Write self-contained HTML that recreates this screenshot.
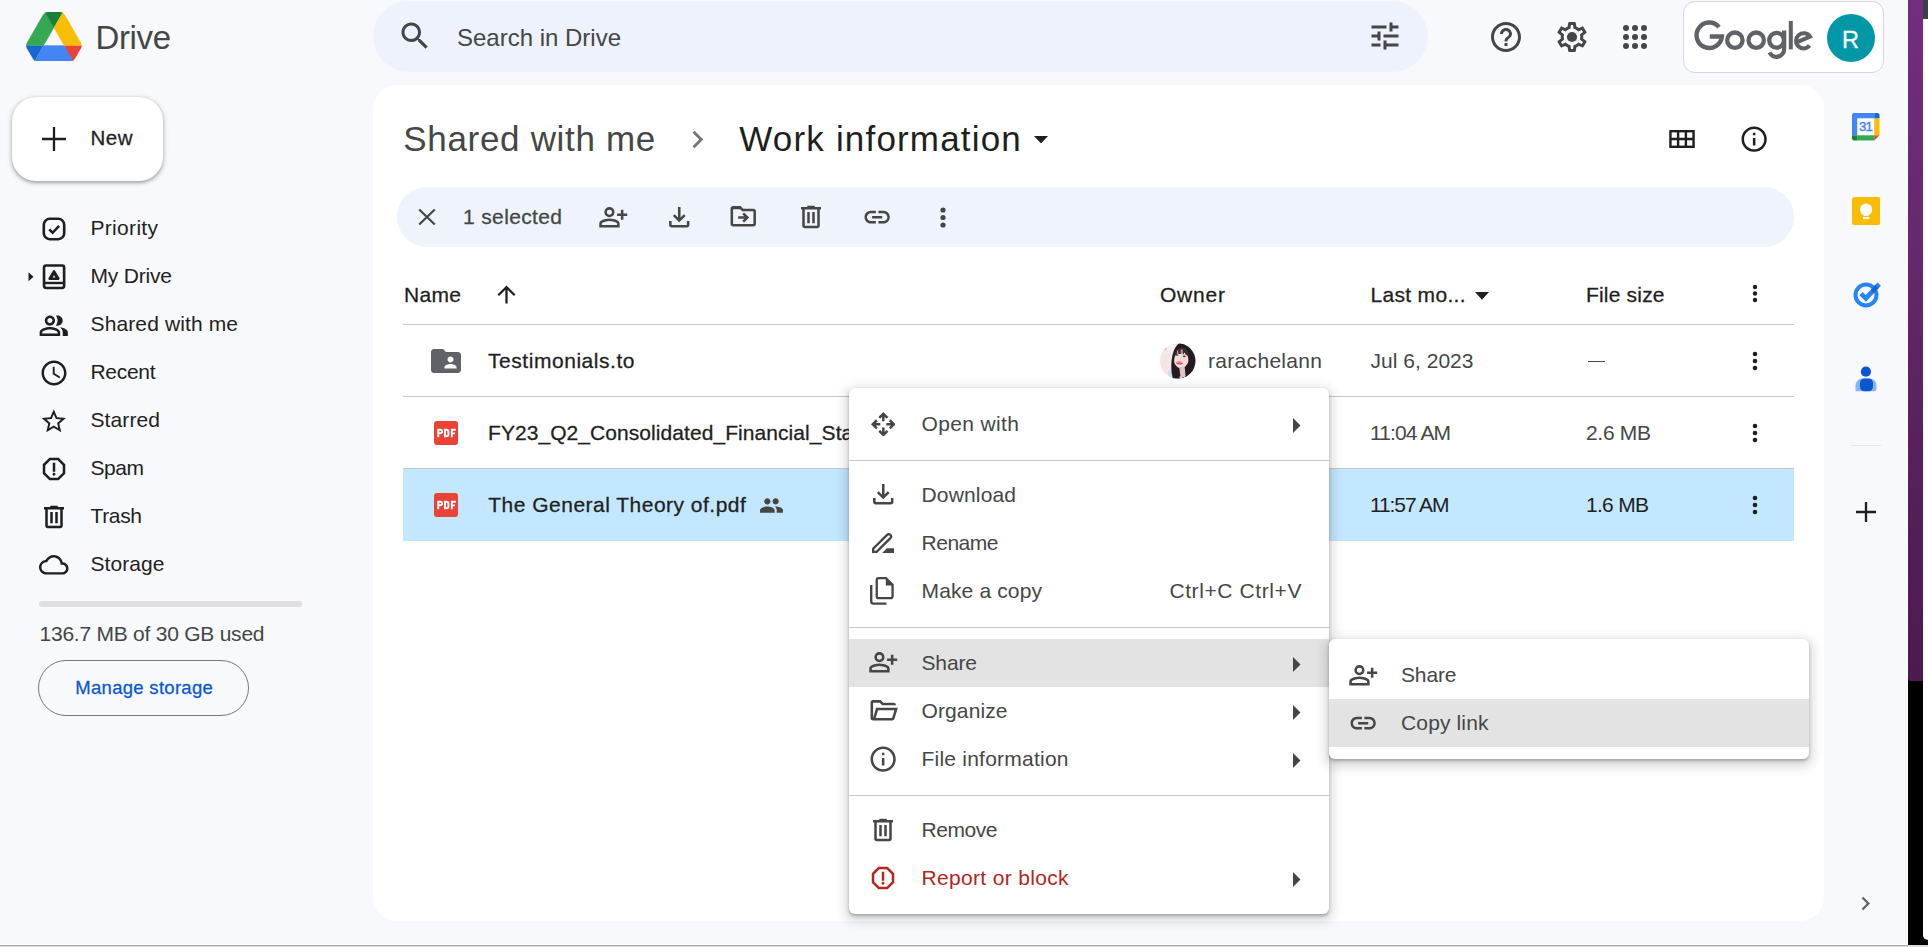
<!DOCTYPE html>
<html><head><meta charset="utf-8"><title>Drive</title>
<style>
html,body{margin:0;padding:0;}
body{width:1928px;height:947px;overflow:hidden;background:#f7f9fc;position:relative;font-family:"Liberation Sans",sans-serif;}
.a{position:absolute;display:block;}
.t{white-space:nowrap;line-height:1;}
</style></head><body>
<div class="a" style="left:1908px;top:670px;width:20px;height:275px;background:#000;"></div>
<div class="a" style="left:1908px;top:0px;width:15px;height:680.5px;background:linear-gradient(180deg,#712e7d 0%,#66286f 35%,#59205d 65%,#4e194f 100%);border-bottom-left-radius:3px;"></div>
<div class="a" style="left:1923px;top:0px;width:5px;height:19px;background:#3c4043;"></div>
<div class="a" style="left:1923px;top:19px;width:5px;height:920.5px;background:#fff;border-bottom-left-radius:6px;"></div>
<div class="a" style="left:1907px;top:0px;width:1px;height:945px;background:#fff;"></div>
<div class="a" style="left:0px;top:944px;width:1908px;height:1px;background:#fff;"></div>
<div class="a" style="left:0px;top:945px;width:1908px;height:1px;background:#aaa8b4;"></div>
<div class="a" style="left:0px;top:946px;width:1908px;height:1px;background:#dcdaea;"></div>
<div class="a" style="left:1908px;top:945px;width:20px;height:2px;background:#dcdcdc;"></div>
<svg class="a" style="left:26px;top:11.8px" width="55.8" height="49.4" viewBox="0 0 87.3 78"><path d="m6.6 66.85 3.85 6.65c.8 1.4 1.95 2.5 3.3 3.3l13.750-23.800h-27.500c0 1.550.4 3.100 1.200 4.500z" fill="#1967d2" stroke="#1967d2" stroke-width=".5"/><path d="m43.650 25-13.750-23.800c-1.350.8-2.500 1.900-3.300 3.300l-25.400 44a9.060 9.060 0 0 0 -1.200 4.500h27.500z" fill="#34a853" stroke="#34a853" stroke-width=".5"/><path d="m73.550 76.800c1.350-.8 2.500-1.900 3.300-3.300l1.600-2.750 7.650-13.250c.8-1.400 1.200-2.950 1.200-4.500h-27.502l5.852 11.500z" fill="#ea4335" stroke="#ea4335" stroke-width=".5"/><path d="m43.650 25 13.750-23.800c-1.350-.8-2.900-1.200-4.500-1.200h-18.500c-1.600 0-3.150.45-4.500 1.200z" fill="#188038" stroke="#188038" stroke-width=".5"/><path d="m59.800 53h-32.300l-13.750 23.800c1.350.8 2.900 1.200 4.500 1.200h50.800c1.600 0 3.150-.45 4.500-1.200z" fill="#4285f4" stroke="#4285f4" stroke-width=".5"/><path d="m73.400 26.500-12.700-22c-.8-1.400-1.950-2.500-3.300-3.300l-13.750 23.800 16.150 28h27.450c0-1.550-.4-3.100-1.200-4.500z" fill="#fbbc04" stroke="#fbbc04" stroke-width=".5"/></svg>
<span class="a t" id="drive" style="top:20.82px;font-size:33px;color:#444746;letter-spacing:-0.379px;left:95.50px;">Drive</span>
<div class="a" style="left:372.5px;top:0.5px;width:1055px;height:71.3px;background:#edf2fc;border-radius:36px;"></div>
<svg class="a" style="left:396.60px;top:17.70px" width="36" height="36" viewBox="0 0 24 24" fill="#444746"><path d="M15.5 14h-.79l-.28-.27C15.41 12.59 16 11.11 16 9.5 16 5.91 13.09 3 9.5 3S3 5.91 3 9.5 5.91 16 9.5 16c1.61 0 3.09-.59 4.23-1.57l.27.28v.79l5 4.99L20.49 19l-4.99-5zm-6 0C7.01 14 5 11.99 5 9.5S7.01 5 9.5 5 14 7.01 14 9.5 11.99 14 9.5 14z"/></svg>
<span class="a t" id="search" style="top:25.98px;font-size:24px;color:#444746;letter-spacing:-0.004px;left:457.00px;">Search in Drive</span>
<svg class="a" style="left:1367.00px;top:18.00px" width="36" height="36" viewBox="0 0 24 24" fill="#444746"><path d="M3 17v2h6v-2H3zM3 5v2h10V5H3zm10 16v-2h8v-2h-8v-2h-2v6h2zM7 9v2H3v2h4v2h2V9H7zm14 4v-2H11v2h10zm-6-4h2V7h4V5h-4V3h-2v6z"/></svg>
<svg class="a" style="left:1488.00px;top:19.00px" width="36" height="36" viewBox="0 0 24 24" fill="#444746"><path d="M11 18h2v-2h-2v2zm1-16C6.48 2 2 6.48 2 12s4.48 10 10 10 10-4.48 10-10S17.52 2 12 2zm0 18c-4.41 0-8-3.59-8-8s3.59-8 8-8 8 3.59 8 8-3.59 8-8 8zm0-14c-2.21 0-4 1.79-4 4h2c0-1.1.9-2 2-2s2 .9 2 2c0 2-3 1.750-3 5h2c0-2.250 3-2.500 3-5 0-2.210-1.790-4-4-4z"/></svg>
<svg class="a" style="left:1554.30px;top:19.20px" width="36" height="36" viewBox="0 0 24 24" fill="#444746"><path d="M19.43 12.98c.04-.32.07-.64.07-.98 0-.34-.03-.66-.07-.98l2.110-1.650c.19-.15.24-.42.12-.64l-2-3.460c-.09-.16-.26-.25-.44-.25-.06 0-.12.010-.17.030l-2.490 1c-.52-.4-1.080-.73-1.690-.98l-.38-2.650C14.460 2.180 14.250 2 14 2h-4c-.25 0-.46.180-.49.420l-.38 2.650c-.61.250-1.170.590-1.690.980l-2.490-1c-.06-.020-.12-.030-.18-.030-.17 0-.34.090-.43.250l-2 3.460c-.13.220-.07.490.12.640l2.110 1.650c-.04.320-.07.650-.07.980 0 .33.030.66.070.98l-2.110 1.650c-.19.150-.24.420-.12.640l2 3.460c.09.160.26.250.44.250.06 0 .12-.010.17-.030l2.490-1c.52.400 1.080.730 1.690.980l.38 2.650c.03.240.24.420.49.420h4c.25 0 .46-.180.490-.420l.38-2.650c.61-.250 1.170-.590 1.690-.980l2.490 1c.06.020.12.030.18.030.17 0 .34-.090.43-.250l2-3.460c.12-.220.07-.490-.12-.640l-2.110-1.650zm-1.980-1.710c.04.310.05.520.05.730 0 .21-.02.430-.05.730l-.14 1.130.89.700 1.080.840-.7 1.210-1.270-.510-1.040-.420-.9.680c-.43.320-.84.560-1.250.730l-1.060.430-.16 1.130-.2 1.350h-1.400l-.19-1.350-.16-1.130-1.060-.430c-.43-.180-.83-.410-1.230-.710l-.91-.7-1.060.430-1.270.510-.7-1.210 1.080-.840.89-.7-.14-1.130c-.03-.310-.05-.540-.05-.740s.02-.430.05-.730l.14-1.130-.89-.7-1.080-.840.7-1.210 1.270.510 1.040.420.9-.680c.43-.320.84-.560 1.250-.730l1.060-.430.16-1.130.2-1.350h1.390l.19 1.350.16 1.130 1.060.430c.43.180.83.410 1.230.710l.91.700 1.060-.430 1.270-.510.7 1.210-1.070.850-.89.700.14 1.130z"/><circle cx="12" cy="12" r="3.4"/></svg>
<svg class="a" style="left:1617.00px;top:19.00px" width="36" height="36" viewBox="0 0 24 24" fill="#444746"><circle cx="6" cy="6" r="2"/><circle cx="6" cy="12" r="2"/><circle cx="6" cy="18" r="2"/><circle cx="12" cy="6" r="2"/><circle cx="12" cy="12" r="2"/><circle cx="12" cy="18" r="2"/><circle cx="18" cy="6" r="2"/><circle cx="18" cy="12" r="2"/><circle cx="18" cy="18" r="2"/></svg>
<div class="a" style="left:1683px;top:1px;width:199px;height:70px;background:#fff;border:1px solid #d3d6db;border-radius:12px;"></div>
<div class="a" style="left:1827px;top:14px;width:48px;height:48px;background:#0097a7;border-radius:50%;"></div>
<span class="a t" id="avR" style="top:28.61px;font-size:23.5px;color:#fff;letter-spacing:0.000px;left:1842.00px;-webkit-text-stroke:0.3px #fff;">R</span>
<svg class="a" style="left:0;top:0" width="1928" height="80" viewBox="0 0 1928 80"><g fill="none" stroke="#5f6368" stroke-width="4.3"><path d="M1719.0 27.1 A12.7 12.7 0 1 0 1721.9 36.5 L1709.8 36.5" stroke-width="4.4"/><circle cx="1734.9" cy="40.2" r="7.7"/><circle cx="1756.2" cy="40.2" r="7.7"/><circle cx="1776.6" cy="40.2" r="7.4"/><path d="M1784.1 30.6 L1784.1 49.6 A7.6 7.6 0 0 1 1769.6 52.4"/><path d="M1790.8 20.9 L1790.8 49.4" stroke-width="4"/><path d="M1796.0 42.6 L1810.0 36.6 A7.6 7.6 0 1 0 1809.6 45.6" stroke-width="4"/></g></svg>
<div class="a" style="left:12px;top:97px;width:151px;height:84px;background:#fff;border-radius:24px;box-shadow:0 1.5px 3px rgba(60,64,67,.3),0 1.5px 4.5px 1.5px rgba(60,64,67,.15);"></div>
<svg class="a" style="left:40px;top:125px" width="28" height="28" viewBox="0 0 28 28"><path d="M14 2v24M2 14h24" stroke="#1f1f1f" stroke-width="2.3" fill="none"/></svg>
<span class="a t" id="new" style="top:128.05px;font-size:20.5px;color:#1f1f1f;letter-spacing:0.492px;left:90.50px;-webkit-text-stroke:0.28px #1f1f1f;">New</span>
<span class="a t" id="sb0" style="top:217.12px;font-size:21px;color:#1f1f1f;letter-spacing:0.308px;left:90.50px;">Priority</span>
<span class="a t" id="sb1" style="top:265.12px;font-size:21px;color:#1f1f1f;letter-spacing:-0.192px;left:90.50px;">My Drive</span>
<span class="a t" id="sb2" style="top:313.12px;font-size:21px;color:#1f1f1f;letter-spacing:0.123px;left:90.50px;">Shared with me</span>
<span class="a t" id="sb3" style="top:361.12px;font-size:21px;color:#1f1f1f;letter-spacing:-0.309px;left:90.50px;">Recent</span>
<span class="a t" id="sb4" style="top:409.12px;font-size:21px;color:#1f1f1f;letter-spacing:0.104px;left:90.50px;">Starred</span>
<span class="a t" id="sb5" style="top:457.12px;font-size:21px;color:#1f1f1f;letter-spacing:-0.453px;left:90.50px;">Spam</span>
<span class="a t" id="sb6" style="top:505.12px;font-size:21px;color:#1f1f1f;letter-spacing:-0.352px;left:90.50px;">Trash</span>
<span class="a t" id="sb7" style="top:553.12px;font-size:21px;color:#1f1f1f;letter-spacing:0.073px;left:90.50px;">Storage</span>
<svg class="a" style="left:36.00px;top:210.75px" width="36" height="36" viewBox="0 0 24 24" fill="#1f1f1f"><rect x="5.200" y="5.200" width="13.600" height="13.600" rx="4" fill="none" stroke="#1f1f1f" stroke-width="1.750"/><path d="M8.800 12.200l2.300 2.300 4.300-4.600" fill="none" stroke="#1f1f1f" stroke-width="1.700"/></svg>
<svg class="a" style="left:36.20px;top:259.00px" width="36" height="36" viewBox="0 0 24 24" fill="#1f1f1f"><rect x="5.350" y="4.300" width="13.400" height="15" rx="1.400" fill="none" stroke="#1f1f1f" stroke-width="1.750"/><path d="M5.400 16h13.300" stroke="#1f1f1f" stroke-width="1.600"/><path d="M12 8.300l2.900 4.800h-5.800z" fill="#1f1f1f" stroke="#1f1f1f" stroke-width="1.700" stroke-linejoin="round"/><path d="M12 10.900l-.9 1.500h1.800z" fill="#f7f9fc"/></svg>
<svg class="a" style="left:27.5px;top:272.3px" width="6" height="9.600" viewBox="0 0 6 9.600"><path d="M0.500 0.300L5.500 4.800 0.500 9.300z" fill="#1f1f1f"/></svg>
<svg class="a" style="left:39.25px;top:310.75px" width="29.5" height="29.5" viewBox="0.500 3.500 23 17" fill="#1f1f1f"><path d="M16.67 13.13C18.04 14.06 19 15.32 19 17v3h4v-3c0-2.180-3.570-3.470-6.330-3.870zM15 12c2.210 0 4-1.790 4-4s-1.790-4-4-4c-.47 0-.91.100-1.330.240C14.500 5.270 15 6.580 15 8s-.5 2.730-1.330 3.760c.42.140.86.240 1.330.240zM9 12c2.210 0 4-1.790 4-4s-1.790-4-4-4-4 1.790-4 4 1.790 4 4 4zm0-6c1.100 0 2 .9 2 2s-.9 2-2 2-2-.9-2-2 .9-2 2-2zm0 7c-2.670 0-8 1.340-8 4v3h16v-3c0-2.660-5.330-4-8-4zm6 5H3v-.99C3.200 16.290 6.300 15 9 15s5.800 1.290 6 2v1z"/></svg>
<svg class="a" style="left:38.90px;top:357.70px" width="30" height="30" viewBox="0 0 24 24" fill="#1f1f1f"><path d="M11.99 2C6.47 2 2 6.48 2 12s4.470 10 9.990 10C17.520 22 22 17.520 22 12S17.520 2 11.990 2zM12 20c-4.420 0-8-3.580-8-8s3.580-8 8-8 8 3.580 8 8-3.580 8-8 8zm.5-13H11v6l5.250 3.150.75-1.230-4.500-2.670z"/></svg>
<svg class="a" style="left:41.45px;top:407.75px" width="25.5" height="25.5" viewBox="1.500 1.500 21 20" fill="#1f1f1f"><path d="M22 9.240l-7.190-.620L12 2 9.190 8.630 2 9.240l5.460 4.730L5.820 21 12 17.270 18.180 21l-1.630-7.030L22 9.240zM12 15.400l-3.760 2.270 1-4.280-3.320-2.880 4.380-.38L12 6.100l1.710 4.040 4.380.38-3.320 2.880 1 4.280L12 15.400z"/></svg>
<svg class="a" style="left:39.00px;top:454.00px" width="30" height="30" viewBox="0 0 24 24" fill="#1f1f1f"><path d="M15.73 3H8.270L3 8.270v7.460L8.270 21h7.460L21 15.730V8.270L15.730 3zM19 14.900L14.900 19H9.100L5 14.900V9.100L9.100 5h5.800L19 9.100v5.800zM11 7h2v7.100h-2zM12 17.300c.66 0 1.150-.5 1.150-1.150s-.5-1.150-1.150-1.150-1.150.5-1.150 1.150.5 1.150 1.150 1.150z"/></svg>
<svg class="a" style="left:39.00px;top:501.70px" width="30" height="30" viewBox="0 0 24 24" fill="#1f1f1f"><path d="M7 21q-.825 0-1.413-.588T5 19V6H4V4h5V3h6v1h5v2h-1v13q0 .825-.588 1.413T17 21H7ZM17 6H7v13h10V6ZM9 17h2V8H9v9Zm4 0h2V8h-2v9Z"/></svg>
<svg class="a" style="left:39.25px;top:550.25px" width="29.5" height="29.5" viewBox="0 0 24 24" fill="#1f1f1f"><path d="M19.35 10.040C18.670 6.590 15.640 4 12 4 9.110 4 6.600 5.640 5.350 8.040 2.340 8.360 0 10.910 0 14c0 3.310 2.690 6 6 6h13c2.760 0 5-2.240 5-5 0-2.640-2.050-4.780-4.650-4.960zM19 18H6c-2.210 0-4-1.790-4-4 0-2.050 1.530-3.760 3.560-3.970l1.070-.11.5-.95C8.080 7.140 9.940 6 12 6c2.620 0 4.880 1.860 5.390 4.430l.3 1.500 1.530.11c1.560.1 2.780 1.410 2.780 2.960 0 1.650-1.350 3-3 3z"/></svg>
<div class="a" style="left:39px;top:601px;width:263px;height:6px;background:#dfdfdf;border-radius:3px;"></div>
<span class="a t" id="used" style="top:623.22px;font-size:21px;color:#444746;letter-spacing:-0.237px;left:39.50px;">136.7 MB of 30 GB used</span>
<div class="a" style="left:38px;top:660px;width:209px;height:54px;border:1px solid #747775;border-radius:28px;"></div>
<span class="a t" id="manage" style="top:678.64px;font-size:18.5px;color:#0b57d0;letter-spacing:0.292px;left:75.30px;-webkit-text-stroke:0.28px #0b57d0;">Manage storage</span>
<div class="a" style="left:373px;top:85px;width:1451px;height:836px;background:#fff;border-radius:24px;"></div>
<span class="a t" id="bc1" style="top:120.77px;font-size:35px;color:#444746;letter-spacing:0.679px;left:403.30px;">Shared with me</span>
<svg class="a" style="left:679.70px;top:122.00px" width="35" height="35" viewBox="0 0 24 24" fill="#747775"><path d="M10 6L8.590 7.410 13.170 12l-4.580 4.590L10 18l6-6z"/></svg>
<span class="a t" id="bc2" style="top:120.77px;font-size:35px;color:#1f1f1f;letter-spacing:1.174px;left:739.30px;">Work information</span>
<svg class="a" style="left:1034.4px;top:135.800px" width="14" height="7.500" viewBox="0 0 14 7.500"><path d="M0 0h14l-7 7.500z" fill="#1f1f1f"/></svg>
<svg class="a" style="left:1664.00px;top:121.00px" width="36" height="36" viewBox="0 0 24 24" fill="#1f1f1f"><rect x="4.3" y="6.800" width="15.400" height="10.400" fill="none" stroke="#1f1f1f" stroke-width="1.600"/><path d="M9.400 6.800v10.400M14.600 6.800v10.400M4.300 12h15.400" stroke="#1f1f1f" stroke-width="1.600" fill="none"/></svg>
<svg class="a" style="left:1738.85px;top:123.65px" width="30.3" height="30.3" viewBox="0 0 24 24" fill="#1f1f1f"><path d="M11 7h2v2h-2zm0 4h2v6h-2zm1-9C6.480 2 2 6.480 2 12s4.480 10 10 10 10-4.480 10-10S17.520 2 12 2zm0 18c-4.410 0-8-3.590-8-8s3.590-8 8-8 8 3.590 8 8-3.590 8-8 8z"/></svg>
<div class="a" style="left:397px;top:187px;width:1397px;height:60px;background:#eff3fb;border-radius:30px;"></div>
<svg class="a" style="left:417px;top:207px" width="20" height="20" viewBox="0 0 20 20"><path d="M2.200 2.500l15.600 15M17.800 2.500l-15.600 15" stroke="#444746" stroke-width="2.200" fill="none"/></svg>
<span class="a t" id="sel" style="top:206.47px;font-size:21px;color:#444746;letter-spacing:0.363px;left:463.00px;-webkit-text-stroke:0.28px #444746;">1 selected</span>
<svg class="a" style="left:597.55px;top:201.75px" width="30.5" height="30.5" viewBox="0 0 24 24" fill="#444746"><path d="M18 14v-3h-3V9h3V6h2v3h3v2h-3v3h-2Zm-9-2q-1.650 0-2.825-1.175T5 8q0-1.650 1.175-2.825T9 4q1.650 0 2.825 1.175T13 8q0 1.650-1.175 2.825T9 12Zm-8 8v-2.800q0-.85.438-1.563T2.600 14.550q1.550-.775 3.150-1.163T9 13q1.650 0 3.250.388t3.150 1.162q.725.375 1.163 1.088T17 17.200V20H1Zm2-2h12v-.8q0-.275-.138-.5t-.362-.35q-1.350-.675-2.725-1.013T9 15q-1.400 0-2.775.338T3.500 16.350q-.225.125-.363.35T3 17.200v.8Zm6-8q.825 0 1.413-.588T11 8q0-.825-.588-1.413T9 6q-.825 0-1.413.588T7 8q0 .825.588 1.413T9 10Z"/></svg>
<svg class="a" style="left:663.75px;top:201.75px" width="30.5" height="30.5" viewBox="0 0 24 24" fill="#444746"><path d="M12 16l-5-5 1.400-1.450 2.600 2.600V4h2v8.150l2.600-2.600L17 11l-5 5Zm-6 4q-.825 0-1.413-.588T4 18v-3h2v3h12v-3h2v3q0 .825-.588 1.413T18 20H6Z"/></svg>
<svg class="a" style="left:728.45px;top:201.35px" width="30.5" height="30.5" viewBox="0 0 24 24" fill="#444746"><path d="M20 6h-8l-2-2H4c-1.100 0-2 .9-2 2v12c0 1.100.9 2 2 2h16c1.100 0 2-.9 2-2V8c0-1.100-.9-2-2-2zm0 12H4V6h5.170l2 2H20v10zm-7.160-4H8v-2h4.840l-1.590-1.590L12.660 9l4 4-4.010 4-1.410-1.410L12.840 14z"/><path d="M2.500 6.500V5.500L4 4.300h5.700l2 2.200z"/></svg>
<svg class="a" style="left:796.00px;top:201.80px" width="30" height="30" viewBox="0 0 24 24" fill="#444746"><path d="M7 21q-.825 0-1.413-.588T5 19V6H4V4h5V3h6v1h5v2h-1v13q0 .825-.588 1.413T17 21H7ZM17 6H7v13h10V6ZM9 17h2V8H9v9Zm4 0h2V8h-2v9Z"/></svg>
<svg class="a" style="left:861.85px;top:201.85px" width="30.3" height="30.3" viewBox="0 0 24 24" fill="#444746"><path d="M3.900 12c0-1.710 1.390-3.100 3.100-3.100h4V7H7c-2.760 0-5 2.240-5 5s2.240 5 5 5h4v-1.900H7c-1.710 0-3.100-1.390-3.100-3.100zM8 13h8v-2H8v2zm9-6h-4v1.900h4c1.710 0 3.100 1.390 3.100 3.100s-1.390 3.100-3.100 3.100h-4V17h4c2.760 0 5-2.240 5-5s-2.240-5-5-5z"/></svg>
<svg class="a" style="left:938.8px;top:205.5px" width="8" height="23.0" viewBox="0 0 8 23.0" fill="#444746"><circle cx="4" cy="4" r="2.6"/><circle cx="4" cy="11.5" r="2.6"/><circle cx="4" cy="19.0" r="2.6"/></svg>
<span class="a t" id="hName" style="top:283.52px;font-size:21px;color:#1f1f1f;letter-spacing:0.323px;left:404.00px;-webkit-text-stroke:0.28px #1f1f1f;">Name</span>
<svg class="a" style="left:493.00px;top:280.50px" width="27" height="27" viewBox="0 0 24 24" fill="#1f1f1f"><path d="M4 12l1.410 1.410L11 7.830V20h2V7.830l5.580 5.590L20 12l-8-8-8 8z"/></svg>
<span class="a t" id="hOwner" style="top:283.52px;font-size:21px;color:#1f1f1f;letter-spacing:0.785px;left:1160.00px;-webkit-text-stroke:0.28px #1f1f1f;">Owner</span>
<span class="a t" id="hLast" style="top:283.52px;font-size:21px;color:#1f1f1f;letter-spacing:0.311px;left:1370.50px;-webkit-text-stroke:0.28px #1f1f1f;">Last mo...</span>
<svg class="a" style="left:1474.500px;top:292.200px" width="14" height="7.800" viewBox="0 0 14 7.800"><path d="M0 0h14l-7 7.800z" fill="#1f1f1f"/></svg>
<span class="a t" id="hSize" style="top:283.52px;font-size:21px;color:#1f1f1f;letter-spacing:0.184px;left:1586.00px;-webkit-text-stroke:0.28px #1f1f1f;">File size</span>
<svg class="a" style="left:1750.5px;top:283.0px" width="8" height="21.0" viewBox="0 0 8 21.0" fill="#1f1f1f"><circle cx="4" cy="4" r="2.2"/><circle cx="4" cy="10.5" r="2.2"/><circle cx="4" cy="17.0" r="2.2"/></svg>
<div class="a" style="left:403px;top:324px;width:1391px;height:1px;background:#c7c7c7;"></div>
<div class="a" style="left:403px;top:396px;width:1391px;height:1px;background:#c7c7c7;"></div>
<div class="a" style="left:403px;top:468px;width:1391px;height:1px;background:#c7c7c7;"></div>
<div class="a" style="left:403px;top:469px;width:1391px;height:72px;background:#c2e7ff;"></div>
<svg class="a" style="left:428.20px;top:342.80px" width="36" height="36" viewBox="0 0 24 24" fill="#5f6368"><path d="M20 6h-8l-2-2H4c-1.100 0-1.990.9-1.990 2L2 18c0 1.100.9 2 2 2h16c1.100 0 2-.9 2-2V8c0-1.100-.9-2-2-2zm-5 3c1.100 0 2 .9 2 2s-.9 2-2 2-2-.9-2-2 .9-2 2-2zm4 8h-8v-1c0-1.330 2.670-2 4-2s4 .67 4 2v1z"/></svg>
<span class="a t" id="r1n" style="top:349.82px;font-size:21px;color:#1f1f1f;letter-spacing:0.544px;left:488.00px;-webkit-text-stroke:0.28px #1f1f1f;">Testimonials.to</span>
<svg class="a" style="left:1160px;top:342.700px" width="35.500" height="36" viewBox="0 0 36 36"><defs><clipPath id="av"><circle cx="18" cy="18" r="18"/></clipPath></defs><filter id="bl"><feGaussianBlur stdDeviation=".45"/></filter><g clip-path="url(#av)"><g filter="url(#bl)"><rect width="36" height="36" fill="#f3f1ee"/><path d="M0 9c2-2 4-1 4.500 2l.5-3c1-1.500 2.500-1.500 3 0l.5 3 .7-2c1-1 2.300-.5 2.300 1l-.2 8 1.200 3-1 9c-3 3-9 2-11.500-3z" fill="#f6e6e3"/><circle cx="5" cy="5.500" r="1.800" fill="#f7b7a8"/><path d="M7 36l1.500-8 4-1.500 1 9.500z" fill="#cfe0f4"/><path d="M19.500 0C26 0 34 3 36 13c1.500 8 0 15-3.500 20l-7.500 2-5 1h-7l-1.200-6c-.5-6-.5-11 .5-16C13.300 8 16 2 19.500 0z" fill="#231c20"/><ellipse cx="21.600" cy="17" rx="7.300" ry="8.300" transform="rotate(12 21.600 17)" fill="#f3dad6"/><path d="M19.500 24h5.500l1 9.500-5 2z" fill="#e6c2bc"/><path d="M20 33l3.500 3h-3.500z M23 36l2-2.500 1.500 2.500z" fill="#cfe0f4"/><path d="M13.800 12.500C15 6.500 20 3.500 24 4.500c3.500 1 5 4 5.500 9-1.500-1.200-2.500-1.700-4-2l-.3-4.500-1.200 4.200c-2.200-.5-4-.5-5.500-.2l.2-4-1.500 4.300c-1.300.3-2.400.7-3.400 1.200z" fill="#3a2b30"/><path d="M17.300 8l1.200-1.500v4.500l-1.500.5z M21 6.500l2-.5.3 5-2.300-.2z" fill="#b99a9c"/><ellipse cx="17.300" cy="12" rx="1.500" ry=".8" fill="#4a3a44"/><ellipse cx="24.600" cy="13.300" rx="1.600" ry=".8" fill="#4a3a44"/><ellipse cx="19.800" cy="20" rx="3.300" ry="1.500" transform="rotate(6 19.800 20)" fill="#e2405b"/><path d="M17 19.300c2 .6 4 .7 5.800.3" stroke="#f6e6e6" stroke-width=".6" fill="none"/></g></g></svg>
<span class="a t" id="r1o" style="top:350.42px;font-size:21px;color:#444746;letter-spacing:0.309px;left:1208.00px;">rarachelann</span>
<span class="a t" id="r1d" style="top:350.42px;font-size:21px;color:#444746;letter-spacing:0.025px;left:1370.50px;">Jul 6, 2023</span>
<div class="a" style="left:1587.5px;top:360.5px;width:17px;height:1.6px;background:#444746;"></div>
<svg class="a" style="left:1750.5px;top:349.5px" width="8" height="22" viewBox="0 0 8 22" fill="#1f1f1f"><circle cx="4" cy="4" r="2.3"/><circle cx="4" cy="11" r="2.3"/><circle cx="4" cy="18" r="2.3"/></svg>
<svg class="a" style="left:434.2px;top:421px" width="24" height="24" viewBox="0 0 24 24"><rect width="24" height="24" rx="3" fill="#ea4335"/><g fill="none" stroke="#fff" stroke-width="1.950" stroke-linejoin="miter"><path d="M4.200 16.200V8.650h2.100a1.800 1.800 0 0 1 0 3.600H4.200"/><path d="M11.050 8.650h1.400a2 2 0 0 1 2 2v2.600a2 2 0 0 1-2 2h-1.400z"/><path d="M17.850 16.200V8.650h4M17.850 12.350h3.200"/></g></svg>
<span class="a t" id="r2n" style="top:421.92px;font-size:21px;color:#1f1f1f;letter-spacing:0.065px;left:488.00px;-webkit-text-stroke:0.28px #1f1f1f;">FY23_Q2_Consolidated_Financial_Statements</span>
<span class="a t" id="r2d" style="top:422.22px;font-size:21px;color:#444746;letter-spacing:-0.882px;left:1370.00px;">11:04 AM</span>
<span class="a t" id="r2s" style="top:422.22px;font-size:21px;color:#444746;letter-spacing:-0.306px;left:1586.00px;">2.6 MB</span>
<svg class="a" style="left:1750.5px;top:421.5px" width="8" height="22" viewBox="0 0 8 22" fill="#1f1f1f"><circle cx="4" cy="4" r="2.3"/><circle cx="4" cy="11" r="2.3"/><circle cx="4" cy="18" r="2.3"/></svg>
<svg class="a" style="left:434.2px;top:493px" width="24" height="24" viewBox="0 0 24 24"><rect width="24" height="24" rx="3" fill="#ea4335"/><g fill="none" stroke="#fff" stroke-width="1.950" stroke-linejoin="miter"><path d="M4.200 16.200V8.650h2.100a1.800 1.800 0 0 1 0 3.600H4.200"/><path d="M11.050 8.650h1.400a2 2 0 0 1 2 2v2.600a2 2 0 0 1-2 2h-1.400z"/><path d="M17.850 16.200V8.650h4M17.850 12.350h3.200"/></g></svg>
<span class="a t" id="r3n" style="top:493.92px;font-size:21px;color:#1f1f1f;letter-spacing:0.482px;left:488.30px;-webkit-text-stroke:0.28px #1f1f1f;">The General Theory of.pdf</span>
<svg class="a" style="left:759.30px;top:492.80px" width="25" height="25" viewBox="0 0 24 24" fill="#444746"><path d="M16 11c1.660 0 2.990-1.340 2.990-3S17.660 5 16 5c-1.660 0-3 1.340-3 3s1.340 3 3 3zm-8 0c1.660 0 2.990-1.340 2.990-3S9.660 5 8 5C6.340 5 5 6.340 5 8s1.340 3 3 3zm0 2c-2.330 0-7 1.170-7 3.500V19h14v-2.500c0-2.330-4.670-3.500-7-3.500zm8 0c-.29 0-.62.020-.97.050 1.160.84 1.970 1.970 1.970 3.450V19h6v-2.500c0-2.330-4.670-3.500-7-3.500z"/></svg>
<span class="a t" id="r3d" style="top:494.22px;font-size:21px;color:#1f1f1f;letter-spacing:-1.096px;left:1370.00px;">11:57 AM</span>
<span class="a t" id="r3s" style="top:494.22px;font-size:21px;color:#1f1f1f;letter-spacing:-0.706px;left:1586.00px;">1.6 MB</span>
<svg class="a" style="left:1750.5px;top:493.5px" width="8" height="22" viewBox="0 0 8 22" fill="#1f1f1f"><circle cx="4" cy="4" r="2.3"/><circle cx="4" cy="11" r="2.3"/><circle cx="4" cy="18" r="2.3"/></svg>
<svg class="a" style="left:1852px;top:113px" width="27.500" height="27.500" viewBox="0 0 200 200"><path d="M162 38H38v124h124z" fill="#fff"/><path d="M162 200L200 162h-38z" fill="#ea4335"/><path d="M200 38h-38v124H200z" fill="#fbbc04"/><path d="M162 162H38V200h124z" fill="#34a853"/><path d="M0 162v24C0 193.700 6.300 200 14 200h24v-38z" fill="#188038"/><path d="M200 38V14C200 6.300 193.700 0 186 0h-24v38z" fill="#1967d2"/><path d="M162 0H14C6.300 0 0 6.300 0 14v148h38V38h124z" fill="#4285f4"/><text x="98" y="134" font-family="Liberation Sans,sans-serif" font-size="96" text-anchor="middle" fill="#4285f4" stroke="#4285f4" stroke-width="3" letter-spacing="-6">31</text></svg>
<svg class="a" style="left:1851.800px;top:197px" width="28.500" height="28" viewBox="0 0 28.500 28"><rect width="28.500" height="28" rx="2.500" fill="#fbbc04"/><circle cx="14.100" cy="12.600" r="6.100" fill="#fff"/><rect x="11.600" y="16" width="5" height="2.800" fill="#fff"/><rect x="11" y="19.900" width="6.300" height="2.200" fill="#fff"/></svg>
<svg class="a" style="left:1852px;top:281px" width="30" height="28" viewBox="0 0 30 28"><circle cx="14" cy="14" r="10.500" fill="none" stroke="#2684fc" stroke-width="4"/><path d="M9 12.700l4.900 4.700 13.300-14.300" fill="none" stroke="#2684fc" stroke-width="4.600"/><path d="M20.300 10.500l4.600-5" fill="none" stroke="#1b61d4" stroke-width="4.600"/></svg>
<svg class="a" style="left:1854px;top:365.500px" width="24" height="26" viewBox="0 0 24 26"><path d="M1.500 25.300V19.500a7 7 0 0 1 7-7h7a7 7 0 0 1 7 7v3.300a2.500 2.500 0 0 1-2.500 2.500z" fill="#8ab4f8"/><rect x="5.900" y="12.500" width="13.100" height="12.800" rx="4.500" fill="#0b57d0"/><circle cx="11.900" cy="5.700" r="5.100" fill="#0b57d0"/></svg>
<div class="a" style="left:1851px;top:445px;width:30px;height:1px;background:#e3e5ea;"></div>
<svg class="a" style="left:1855px;top:501px" width="22" height="22" viewBox="0 0 22 22"><path d="M11 1v20M1 11h20" stroke="#1f1f1f" stroke-width="2.300" fill="none"/></svg>
<svg class="a" style="left:1852.00px;top:889.50px" width="27" height="27" viewBox="0 0 24 24" fill="#5f6368"><path d="M10 6L8.590 7.410 13.170 12l-4.580 4.590L10 18l6-6z"/></svg>
<div class="a" style="left:849px;top:388px;width:480px;height:526px;background:#fff;border-radius:6px;box-shadow:0 2px 3.500px rgba(40,44,47,.34),0 4px 11px 4px rgba(40,44,47,.16);"></div>
<div class="a" style="left:849px;top:639px;width:480px;height:48px;background:#e3e3e3;"></div>
<div class="a" style="left:849px;top:460px;width:480px;height:1px;background:#c4c7c5;"></div>
<div class="a" style="left:849px;top:627px;width:480px;height:1px;background:#c4c7c5;"></div>
<div class="a" style="left:849px;top:795px;width:480px;height:1px;background:#c4c7c5;"></div>
<svg class="a" style="left:870.700px;top:411.500px" width="24.700" height="24.700" viewBox="0 0 24.700 24.700" fill="none" stroke="#444746" stroke-width="2.500"><path d="M12.350 9.300V2.500M8.250 5.900L12.350 1.800 16.450 5.900" transform="rotate(0 12.350 12.350)"/><path d="M12.350 9.300V2.500M8.250 5.900L12.350 1.800 16.450 5.900" transform="rotate(90 12.350 12.350)"/><path d="M12.350 9.300V2.500M8.250 5.900L12.350 1.800 16.450 5.900" transform="rotate(180 12.350 12.350)"/><path d="M12.350 9.300V2.500M8.250 5.900L12.350 1.800 16.450 5.900" transform="rotate(270 12.350 12.350)"/></svg>
<span class="a t" id="mOpen" style="top:413.22px;font-size:21px;color:#444746;letter-spacing:0.367px;left:921.50px;">Open with</span>
<svg class="a" style="left:1293px;top:418px" width="7.500" height="15" viewBox="0 0 7.500 15"><path d="M0 0l7.500 7.500L0 15z" fill="#444746"/></svg>
<svg class="a" style="left:867.75px;top:479.45px" width="30.5" height="30.5" viewBox="0 0 24 24" fill="#444746"><path d="M12 16l-5-5 1.400-1.450 2.600 2.600V4h2v8.150l2.600-2.600L17 11l-5 5Zm-6 4q-.825 0-1.413-.588T4 18v-3h2v3h12v-3h2v3q0 .825-.588 1.413T18 20H6Z"/></svg>
<span class="a t" id="mDown" style="top:484.22px;font-size:21px;color:#444746;letter-spacing:0.156px;left:921.50px;">Download</span>
<svg class="a" style="left:871.750px;top:532.800px" width="22.300" height="20" viewBox="0 0 22.300 20"><path d="M1.150 18.850V15.780L15.107 1.827A2.310 2.310 0 0 1 18.373 5.093L4.620 18.850Z" fill="none" stroke="#444746" stroke-width="2.300"/><path d="M10.200 20L14.900 15.300H22.300V20Z" fill="#444746"/></svg>
<span class="a t" id="mRen" style="top:532.22px;font-size:21px;color:#444746;letter-spacing:-0.478px;left:921.50px;">Rename</span>
<svg class="a" style="left:870.400px;top:576.900px" width="24" height="28" viewBox="0 0 24 28"><path d="M8.500 1.150H15.900L22.550 7.800V19.400a1.750 1.750 0 0 1-1.750 1.750H8.500a1.750 1.750 0 0 1-1.750-1.750V2.900a1.750 1.750 0 0 1 1.750-1.750Z" fill="none" stroke="#444746" stroke-width="2.300"/><path d="M15.800 1.200V8.400H23Z" fill="#444746"/><path d="M1.200 7.900V24.200a2.400 2.400 0 0 0 2.400 2.400H16.500" fill="none" stroke="#444746" stroke-width="2.400"/></svg>
<span class="a t" id="mCopy" style="top:580.22px;font-size:21px;color:#444746;letter-spacing:0.144px;left:921.50px;">Make a copy</span>
<svg class="a" style="left:867.75px;top:647.45px" width="30.5" height="30.5" viewBox="0 0 24 24" fill="#444746"><path d="M18 14v-3h-3V9h3V6h2v3h3v2h-3v3h-2Zm-9-2q-1.650 0-2.825-1.175T5 8q0-1.650 1.175-2.825T9 4q1.650 0 2.825 1.175T13 8q0 1.650-1.175 2.825T9 12Zm-8 8v-2.800q0-.85.438-1.563T2.600 14.550q1.550-.775 3.150-1.163T9 13q1.650 0 3.250.388t3.150 1.162q.725.375 1.163 1.088T17 17.200V20H1Zm2-2h12v-.8q0-.275-.138-.5t-.362-.35q-1.350-.675-2.725-1.013T9 15q-1.400 0-2.775.338T3.500 16.350q-.225.125-.363.35T3 17.200v.8Zm6-8q.825 0 1.413-.588T11 8q0-.825-.588-1.413T9 6q-.825 0-1.413.588T7 8q0 .825.588 1.413T9 10Z"/></svg>
<span class="a t" id="mShare" style="top:652.22px;font-size:21px;color:#444746;letter-spacing:-0.137px;left:921.50px;">Share</span>
<svg class="a" style="left:1293px;top:657px" width="7.500" height="15" viewBox="0 0 7.500 15"><path d="M0 0l7.500 7.500L0 15z" fill="#444746"/></svg>
<svg class="a" style="left:867.75px;top:695.45px" width="30.5" height="30.5" viewBox="0 0 24 24" fill="#444746"><path d="M4 20q-.825 0-1.413-.588T2 18V6q0-.825.588-1.413T4 4h6l2 2h8q.825 0 1.413.588T22 8H11.175l-2-2H4v12l2.400-8h17.100l-2.575 8.575q-.2.65-.738 1.038T19 20H4Zm2.100-2H19l1.800-6H7.900l-1.800 6Z"/></svg>
<span class="a t" id="mOrg" style="top:700.22px;font-size:21px;color:#444746;letter-spacing:0.112px;left:921.50px;">Organize</span>
<svg class="a" style="left:1293px;top:705px" width="7.500" height="15" viewBox="0 0 7.500 15"><path d="M0 0l7.500 7.500L0 15z" fill="#444746"/></svg>
<svg class="a" style="left:867.85px;top:743.55px" width="30.3" height="30.3" viewBox="0 0 24 24" fill="#444746"><path d="M11 7h2v2h-2zm0 4h2v6h-2zm1-9C6.480 2 2 6.480 2 12s4.480 10 10 10 10-4.480 10-10S17.520 2 12 2zm0 18c-4.410 0-8-3.590-8-8s3.590-8 8-8 8 3.590 8 8-3.590 8-8 8z"/></svg>
<span class="a t" id="mInfo" style="top:748.22px;font-size:21px;color:#444746;letter-spacing:0.229px;left:921.50px;">File information</span>
<svg class="a" style="left:1293px;top:753px" width="7.500" height="15" viewBox="0 0 7.500 15"><path d="M0 0l7.500 7.500L0 15z" fill="#444746"/></svg>
<svg class="a" style="left:868.00px;top:814.70px" width="30" height="30" viewBox="0 0 24 24" fill="#444746"><path d="M7 21q-.825 0-1.413-.588T5 19V6H4V4h5V3h6v1h5v2h-1v13q0 .825-.588 1.413T17 21H7ZM17 6H7v13h10V6ZM9 17h2V8H9v9Zm4 0h2V8h-2v9Z"/></svg>
<span class="a t" id="mRem" style="top:819.22px;font-size:21px;color:#444746;letter-spacing:-0.441px;left:921.50px;">Remove</span>
<svg class="a" style="left:868.00px;top:862.70px" width="30" height="30" viewBox="0 0 24 24" fill="#b3261e"><path d="M15.73 3H8.270L3 8.270v7.460L8.270 21h7.460L21 15.730V8.270L15.730 3zM19 14.900L14.900 19H9.100L5 14.900V9.100L9.100 5h5.800L19 9.100v5.800zM11 7h2v7.100h-2zM12 17.300c.66 0 1.150-.5 1.150-1.150s-.5-1.150-1.150-1.150-1.150.5-1.150 1.150.5 1.150 1.150 1.150z"/></svg>
<span class="a t" id="mRep" style="top:867.22px;font-size:21px;color:#b3261e;letter-spacing:0.328px;left:921.50px;">Report or block</span>
<svg class="a" style="left:1293px;top:872px" width="7.500" height="15" viewBox="0 0 7.500 15"><path d="M0 0l7.500 7.500L0 15z" fill="#444746"/></svg>
<span class="a t" id="mKeys" style="top:580.22px;font-size:21px;color:#444746;letter-spacing:0.595px;right:626.00px;">Ctrl+C Ctrl+V</span>
<div class="a" style="left:1329px;top:639px;width:480px;height:120px;background:#fff;border-radius:6px;box-shadow:0 2px 3.500px rgba(40,44,47,.34),0 4px 11px 4px rgba(40,44,47,.16);"></div>
<div class="a" style="left:1329px;top:699px;width:480px;height:48px;background:#e3e3e3;"></div>
<svg class="a" style="left:1347.75px;top:659.75px" width="30.5" height="30.5" viewBox="0 0 24 24" fill="#444746"><path d="M18 14v-3h-3V9h3V6h2v3h3v2h-3v3h-2Zm-9-2q-1.650 0-2.825-1.175T5 8q0-1.650 1.175-2.825T9 4q1.650 0 2.825 1.175T13 8q0 1.650-1.175 2.825T9 12Zm-8 8v-2.800q0-.85.438-1.563T2.600 14.550q1.550-.775 3.150-1.163T9 13q1.650 0 3.250.388t3.150 1.162q.725.375 1.163 1.088T17 17.200V20H1Zm2-2h12v-.8q0-.275-.138-.5t-.362-.35q-1.350-.675-2.725-1.013T9 15q-1.400 0-2.775.338T3.500 16.350q-.225.125-.363.35T3 17.200v.8Zm6-8q.825 0 1.413-.588T11 8q0-.825-.588-1.413T9 6q-.825 0-1.413.588T7 8q0 .825.588 1.413T9 10Z"/></svg>
<span class="a t" id="sShare" style="top:663.97px;font-size:21px;color:#444746;letter-spacing:-0.137px;left:1401.00px;">Share</span>
<svg class="a" style="left:1347.85px;top:707.85px" width="30.3" height="30.3" viewBox="0 0 24 24" fill="#444746"><path d="M3.900 12c0-1.710 1.390-3.100 3.100-3.100h4V7H7c-2.760 0-5 2.240-5 5s2.240 5 5 5h4v-1.900H7c-1.710 0-3.100-1.390-3.100-3.100zM8 13h8v-2H8v2zm9-6h-4v1.900h4c1.710 0 3.100 1.390 3.100 3.100s-1.390 3.100-3.100 3.100h-4V17h4c2.760 0 5-2.240 5-5s-2.240-5-5-5z"/></svg>
<span class="a t" id="sCopy" style="top:712.22px;font-size:21px;color:#444746;letter-spacing:0.141px;left:1401.00px;">Copy link</span>
</body></html>
